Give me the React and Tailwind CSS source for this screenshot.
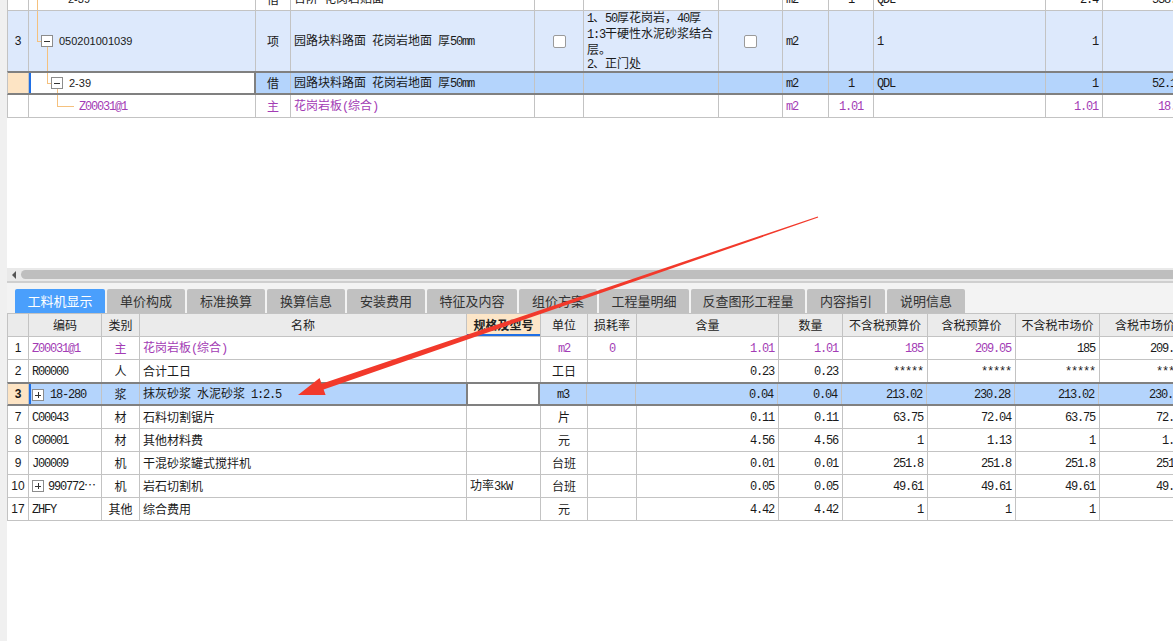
import React from "react";

// Grille de saisie (style logiciel de métré) : tableau du haut, onglets, tableau du bas.

const LINE = "border-[#c3c3c3]";
const PURPLE = "text-[#a33cb5]";

// Texte mixte : les morceaux ASCII en chasse fixe, le reste en CJK
function T({ s }) {
  return (
    <span className="whitespace-pre">
      {s
        .split(/([\x20-\x7E]+)/)
        .filter(Boolean)
        .map((p, i) =>
          /^[\x20-\x7E]+$/.test(p) ? (
            <span key={i} className="font-['Liberation_Mono',monospace] text-[12px] tracking-[-1.2px]">
              {p}
            </span>
          ) : (
            <span key={i}>{p}</span>
          )
        )}
    </span>
  );
}

function C({ w, a = "l", pl = "pl-[3px]", b = "border-r border-r-[#c3c3c3]", cls = "", children }) {
  const al = a === "r" ? "justify-end pr-[4px]" : a === "c" ? "justify-center" : `justify-start ${pl}`;
  return (
    <div
      className={`relative flex items-center shrink-0 overflow-hidden whitespace-nowrap ${b} ${al} ${cls}`}
      style={{ width: w }}
    >
      {children}
    </div>
  );
}

const Num = ({ children, bold }) => (
  <span className={`font-['Liberation_Sans',sans-serif] text-[12px] ${bold ? "font-bold" : ""}`}>{children}</span>
);

const Box = ({ plus, cls }) => (
  <div className={`absolute w-[12px] h-[12px] border border-[#8c8c8c] bg-white flex items-center justify-center ${cls}`}>
    <div className="absolute w-[6px] h-px bg-[#333]" />
    {plus && <div className="absolute w-px h-[6px] bg-[#333]" />}
  </div>
);

const Check = () => <div className="w-[13px] h-[13px] rounded-[2px] border border-[#9a9a9a] bg-white" />;

// ── Tableau du haut ───────────────────────────────────────────────────────

function TopGrid() {
  const row = `flex w-max border-l border-b ${LINE}`;
  return (
    <div className="h-[268px] shrink-0 overflow-hidden bg-white">
      {/* ligne coupée en haut */}
      <div className={`${row} h-[23px] -mt-[12px]`}>
        <C w={21} />
        <C w={227} pl="pl-[39px]">
          <div className="absolute left-[8px] top-0 bottom-0 w-px bg-[#f5c17e]" />
          <span className="font-['Liberation_Sans',sans-serif] text-[11px]">2-39</span>
        </C>
        <C w={35} a="c">借</C>
        <C w={244}><T s="台阶 花岗岩贴面" /></C>
        <C w={49} />
        <C w={135} />
        <C w={64} />
        <C w={46}><T s="m2" /></C>
        <C w={45} a="c"><T s="1" /></C>
        <C w={172}><T s="QDL" /></C>
        <C w={57} a="r"><T s="2.4" /></C>
        <C w={84} a="r"><T s="538.8" /></C>
      </div>

      {/* ligne 3 : article */}
      <div className={`${row} h-[61px] bg-[#dde9fc]`}>
        <C w={21} a="c"><Num>3</Num></C>
        <C w={227} pl="pl-[30px]">
          <div className="absolute left-[8px] top-0 h-[30px] w-px bg-[#f5c17e]" />
          <div className="absolute left-[8px] top-[30px] w-[4px] h-px bg-[#f5c17e]" />
          <Box cls="left-[12px] top-[24px]" />
          <div className="absolute left-[18px] top-[36px] bottom-0 w-px bg-[#f5c17e]" />
          <span className="font-['Liberation_Sans',sans-serif] text-[11px]">050201001039</span>
        </C>
        <C w={35} a="c">项</C>
        <C w={244}><T s="园路块料路面 花岗岩地面 厚50mm" /></C>
        <C w={49} a="c"><Check /></C>
        <C w={135}>
          <div className="leading-[14px]">
            <div><T s="1、50厚花岗岩，40厚" /></div>
            <div><T s="1:3干硬性水泥砂浆结合" /></div>
            <div>层。</div>
            <div><T s="2、正门处" /></div>
          </div>
        </C>
        <C w={64} a="c"><Check /></C>
        <C w={46}><T s="m2" /></C>
        <C w={45} />
        <C w={172}><T s="1" /></C>
        <C w={57} a="r"><T s="1" /></C>
        <C w={84} />
      </div>

      {/* ligne sélectionnée : 2-39 */}
      <div className="flex w-max h-[24px] -mt-px border-y-2 border-[#808080] border-l border-l-[#c3c3c3] bg-[#b4d4fc]">
        <C w={21} cls="bg-[#fde4c4]" />
        <C w={227} pl="pl-[38px]" b="border-l-2 border-l-[#1f6fe5] border-r-2 border-r-[#808080]" cls="bg-white">
          <div className="absolute left-[16px] top-0 h-[10px] w-px bg-[#f5c17e]" />
          <div className="absolute left-[16px] top-[10px] w-[4px] h-px bg-[#f5c17e]" />
          <Box cls="left-[20px] top-[4px]" />
          <div className="absolute left-[26px] top-[16px] bottom-0 w-px bg-[#f5c17e]" />
          <span className="font-['Liberation_Sans',sans-serif] text-[11px]">2-39</span>
        </C>
        <C w={35} a="c">借</C>
        <C w={244}><T s="园路块料路面 花岗岩地面 厚50mm" /></C>
        <C w={49} />
        <C w={135} />
        <C w={64} />
        <C w={46}><T s="m2" /></C>
        <C w={45} a="c"><T s="1" /></C>
        <C w={172}><T s="QDL" /></C>
        <C w={57} a="r"><T s="1" /></C>
        <C w={84} a="r"><T s="52.11" /></C>
      </div>

      {/* ligne matériau */}
      <div className={`${row} h-[23px] ${PURPLE}`}>
        <C w={21} />
        <C w={227} pl="pl-[50px]">
          <div className="absolute left-[28px] top-0 h-[11px] w-px bg-[#f5c17e]" />
          <div className="absolute left-[28px] top-[11px] w-[17px] h-px bg-[#f5c17e]" />
          <T s="Z00031@1" />
        </C>
        <C w={35} a="c">主</C>
        <C w={244}><T s="花岗岩板(综合)" /></C>
        <C w={49} />
        <C w={135} />
        <C w={64} />
        <C w={46}><T s="m2" /></C>
        <C w={45} a="c"><T s="1.01" /></C>
        <C w={172} />
        <C w={57} a="r"><T s="1.01" /></C>
        <C w={84} a="r"><T s="18.7" /></C>
      </div>
    </div>
  );
}

// ── Barre de défilement horizontale ───────────────────────────────────────

function HScroll() {
  return (
    <div className="shrink-0 flex flex-col">
      <div className="h-[13px] bg-[#e9e9e9] flex items-center">
        <div className="w-[14px] shrink-0 flex justify-center">
          <div className="w-0 h-0 border-y-[4px] border-y-transparent border-r-[4px] border-r-[#555]" />
        </div>
        <div className="flex-1 h-[9px] rounded-l-full bg-[#bebebe]" />
      </div>
      <div className="h-[2px] bg-[#cfcfcf]" />
    </div>
  );
}

// ── Onglets ───────────────────────────────────────────────────────────────

const TABS = [
  ["工料机显示", 90],
  ["单价构成", 78],
  ["标准换算", 78],
  ["换算信息", 78],
  ["安装费用", 78],
  ["特征及内容", 90],
  ["组价方案", 78],
  ["工程量明细", 90],
  ["反查图形工程量", 114],
  ["内容指引", 78],
  ["说明信息", 78],
];

function Tabs() {
  return (
    <div className="h-[30px] shrink-0 bg-[#f3f3f3] flex items-end gap-[2px] pl-[8px]">
      {TABS.map(([t, w], i) => (
        <div
          key={t}
          className={`h-[24px] shrink-0 rounded-t-[2px] flex items-center justify-center text-[13px] ${
            i === 0 ? "bg-[#4a9ffc] text-white" : "bg-[#c1c1c1] text-[#333]"
          }`}
          style={{ width: w }}
        >
          {t}
        </div>
      ))}
    </div>
  );
}

// ── Tableau du bas ────────────────────────────────────────────────────────

const LW = [21, 73, 38, 327, 74, 47, 49, 142, 64, 85, 88, 84, 91];
const HEAD = ["", "编码", "类别", "名称", "规格及型号", "单位", "损耗率", "含量", "数量", "不含税预算价", "含税预算价", "不含税市场价", "含税市场价"];

const LOW = [
  { n: "1", code: "Z00031@1", cat: "主", name: "花岗岩板(综合)", unit: "m2", loss: "0", v: ["1.01", "1.01", "185", "209.05"], m: ["185", "209.05"], p: true },
  { n: "2", code: "R00000", cat: "人", name: "合计工日", unit: "工日", v: ["0.23", "0.23", "*****", "*****"], m: ["*****", "*****"] },
  { n: "3", code: "18-280", box: true, cat: "浆", name: "抹灰砂浆 水泥砂浆 1:2.5", unit: "m3", v: ["0.04", "0.04", "213.02", "230.28"], m: ["213.02", "230.28"], sel: true },
  { n: "7", code: "C00043", cat: "材", name: "石料切割锯片", unit: "片", v: ["0.11", "0.11", "63.75", "72.04"], m: ["63.75", "72.04"] },
  { n: "8", code: "C00001", cat: "材", name: "其他材料费", unit: "元", v: ["4.56", "4.56", "1", "1.13"], m: ["1", "1.13"] },
  { n: "9", code: "J00009", cat: "机", name: "干混砂浆罐式搅拌机", unit: "台班", v: ["0.01", "0.01", "251.8", "251.8"], m: ["251.8", "251.8"] },
  { n: "10", code: "990772…", box: true, cat: "机", name: "岩石切割机", spec: "功率3kW", unit: "台班", v: ["0.05", "0.05", "49.61", "49.61"], m: ["49.61", "49.61"] },
  { n: "17", code: "ZHFY", cat: "其他", name: "综合费用", unit: "元", v: ["4.42", "4.42", "1", "1"], m: ["1", "1"] },
];

function LowRow({ r }) {
  const pc = r.p ? PURPLE : "";
  const rowCls = r.sel
    ? "h-[24px] -mt-px border-y-2 border-[#808080] border-l border-l-[#c3c3c3] bg-[#b4d4fc]"
    : `h-[23px] border-l border-b ${LINE} bg-white`;
  return (
    <div className={`flex w-max ${rowCls}`}>
      <C w={LW[0]} a="c" cls={r.sel ? "bg-[#fde4c4]" : ""}>
        <Num bold={r.sel}>{r.n}</Num>
      </C>
      <C
        w={LW[1]}
        pl={r.box ? "pl-[19px]" : "pl-[3px]"}
        b={r.sel ? "border-l-2 border-l-[#1f6fe5] border-r border-r-[#c3c3c3]" : undefined}
        cls={pc}
      >
        {r.box && <Box plus cls={r.sel ? "left-[1px] top-[5px]" : "left-[3px] top-[5px]"} />}
        <T s={r.code} />
      </C>
      <C w={LW[2]} a="c" cls={pc}>{r.cat}</C>
      <C w={LW[3]} cls={pc}><T s={r.name} /></C>
      <C
        w={LW[4]}
        b={r.sel ? "border-x-2 border-[#808080]" : undefined}
        cls={r.sel ? "bg-white -ml-px" : ""}
      >
        {r.spec && <T s={r.spec} />}
      </C>
      <C w={LW[5]} a="c" cls={pc}><T s={r.unit} /></C>
      <C w={LW[6]} a="c" cls={pc}>{r.loss && <T s={r.loss} />}</C>
      {r.v.map((x, i) => (
        <C key={i} w={LW[7 + i]} a="r" cls={pc}><T s={x} /></C>
      ))}
      {r.m.map((x, i) => (
        <C key={i} w={LW[11 + i]} a="r"><T s={x} /></C>
      ))}
    </div>
  );
}

function BottomGrid() {
  return (
    <div className="flex-1 min-h-0 bg-white overflow-hidden">
      <div className={`flex w-max h-[24px] border-l border-y ${LINE} bg-[#ebebeb] text-[#222]`}>
        {HEAD.map((h, i) => (
          <C key={i} w={LW[i]} a="c" cls={i === 4 ? "bg-[#fde6c8] font-bold" : ""}>
            {h}
            {i === 4 && <div className="absolute left-0 right-0 bottom-0 h-[2px] bg-[#1f6fe5]" />}
          </C>
        ))}
      </div>
      {LOW.map((r) => (
        <LowRow key={r.n} r={r} />
      ))}
    </div>
  );
}

// ── Flèche rouge d'annotation ─────────────────────────────────────────────

function Arrow() {
  return (
    <svg className="absolute left-0 top-0 pointer-events-none" width="1173" height="641" viewBox="0 0 1173 641">
      <polygon
        fill="#f2392b"
        points="817.8,216.4 321.6,383.8 319.6,378 298,395 325.6,395 323.6,389.4 818.2,217.6"
      />
    </svg>
  );
}

export default function App() {
  return (
    <div className="relative w-[1173px] h-[641px] overflow-hidden bg-white flex font-['Noto_Sans_CJK_SC',sans-serif] text-[12px] leading-[14px] text-[#1a1a1a]">
      <div className="w-[7px] shrink-0 bg-[#f0f0f0]" />
      <div className="flex-1 min-w-0 flex flex-col">
        <TopGrid />
        <HScroll />
        <Tabs />
        <BottomGrid />
      </div>
      <Arrow />
    </div>
  );
}
